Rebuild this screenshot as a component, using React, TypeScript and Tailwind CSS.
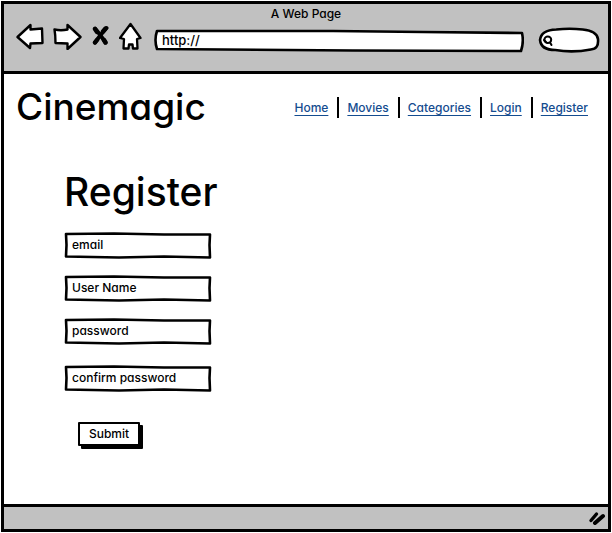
import type { ReactNode } from "react";

const links = ["Home", "Movies", "Categories", "Login", "Register"];

const fields = [
  { id: "email", label: "email", type: "email", gap: "mb-4" },
  { id: "username", label: "User Name", type: "text", gap: "mb-4" },
  { id: "password", label: "password", type: "password", gap: "mb-5" },
  { id: "confirm", label: "confirm password", type: "password", gap: "mb-7" },
];

function ToolButton({ label, width, children }: { label: string; width: string; children: ReactNode }) {
  return (
    <button type="button" aria-label={label} className={`${width} h-7 shrink-0`}>
      {children}
    </button>
  );
}

function Outline({ viewBox, d }: { viewBox: string; d: string }) {
  return (
    <svg
      aria-hidden="true"
      viewBox={viewBox}
      preserveAspectRatio="none"
      className="pointer-events-none absolute inset-0 h-full w-full"
    >
      <path d={d} fill="white" stroke="black" strokeWidth="2.6" strokeLinejoin="round" vectorEffect="non-scaling-stroke" />
    </svg>
  );
}

function Field({ id, label, type, gap }: { id: string; label: string; type: string; gap: string }) {
  return (
    <div className={`relative h-[27px] w-[148px] ${gap}`}>
      <Outline viewBox="0 0 148 27" d="M2 2 L50 1.5 L100 2.5 L146 2.5 L145.5 13 L146 25.5 L100 24.5 L55 25.5 L2 24.5 L2.5 13Z" />
      <input
        id={id}
        type={type}
        aria-label={label}
        placeholder={label}
        className="relative h-full w-full bg-transparent px-2 pb-0.5 text-[12px] outline-none placeholder:text-black"
      />
    </div>
  );
}

export default function App() {
  return (
    <div className="flex min-h-screen flex-col bg-white p-px font-['Inter','Open_Sans',sans-serif] text-[12px] font-medium text-black [font-feature-settings:'cv11']">
      <div className="flex flex-1 flex-col border-[3px] border-black">
        <header className="h-[70px] border-b-[3px] border-black bg-[#c1c1c1]">
          <p className="pt-0.5 text-center leading-4">A Web Page</p>
          <div className="flex items-start pl-3 pr-2">
            <ToolButton label="Back" width="mr-2 w-[29px]">
              <svg viewBox="0 0 29 28" className="h-7 w-[29px]" fill="white" stroke="black" strokeWidth="2.4" strokeLinejoin="round">
                <path d="M1.5 15 L14.5 3 L14.5 7.5 L26 6.5 L26.5 21 L14.5 21.5 L14 26Z" />
              </svg>
            </ToolButton>
            <ToolButton label="Forward" width="mr-2.5 w-[29px]">
              <svg viewBox="0 0 29 28" className="h-7 w-[29px]" fill="white" stroke="black" strokeWidth="2.4" strokeLinejoin="round">
                <path d="M1.5 7.5 Q8 9 14.5 7.5 L14.5 3 L27.5 15 L14.5 27 L14.5 21.5 L2.5 21 Q2.5 13 1.5 7.5Z" />
              </svg>
            </ToolButton>
            <ToolButton label="Stop" width="mr-2.5 w-[17px]">
              <svg viewBox="0 0 17 28" className="h-7 w-[17px]" fill="none" stroke="black" strokeLinecap="round">
                <path d="M3 6.5 Q7 11 13.5 20.5" strokeWidth="4" />
                <path d="M14.5 6 Q9 12 3 20.5" strokeWidth="4" />
                <path d="M3 7 L5 10 M13.5 6.5 L11 9.5 M12 18 L13.5 20.5 M5 18 L3 20.5" strokeWidth="4.4" />
              </svg>
            </ToolButton>
            <ToolButton label="Home" width="mr-3 w-[23px]">
              <svg viewBox="0 0 23 28" className="h-7 w-[23px]" fill="white" stroke="black" strokeWidth="2.3" strokeLinejoin="round">
                <path d="M11.5 2 L21.5 16 L18 17 L18.5 26.5 L14 26.5 L13.5 22.5 L10 22.5 L9.5 26.5 L4.5 26.5 L5 17 L1 16Z" />
              </svg>
            </ToolButton>
            <div className="relative mt-[7px] h-6 flex-1">
              <Outline viewBox="0 0 372 24" d="M3 2 L180 2 L270 3 L370 4 Q372 13 369 22 L200 21.5 L3 20 Q0 11 3 2Z" />
              <input aria-label="Address" defaultValue="http://" className="relative h-full w-full bg-transparent px-2 pb-0.5 text-[13px] outline-none" />
            </div>
            <div className="relative ml-3.5 mt-[5px] h-[26px] w-[62px]">
              <Outline viewBox="0 0 61 26" d="M2 13 Q3 3 18 2.5 Q31 1 44 2.5 Q58 4 59 12 Q60 22 52 22.5 Q34 26 17 23 Q3 23 2 13Z" />
              <svg viewBox="0 0 12 12" fill="none" stroke="black" strokeWidth="2" strokeLinecap="round" className="absolute left-1 top-2 h-3 w-3" aria-hidden="true">
                <ellipse cx="5.8" cy="4.8" rx="3.4" ry="3.2" />
                <path d="M2 5 L4 7 M8 7.5 L9.5 10" />
              </svg>
              <input aria-label="Search" className="relative h-full w-full bg-transparent pl-5 pr-2 outline-none" />
            </div>
          </div>
        </header>

        <main className="flex-1">
          <div className="flex items-center justify-between pl-3 pr-5 pt-2">
            <h1 className="text-[37px] font-medium leading-[50px]">Cinemagic</h1>
            <nav aria-label="Main" className="flex divide-x-2 divide-black">
              {links.map((link) => (
                <a
                  key={link}
                  href="#"
                  className="pl-2 pr-[9px] pt-px leading-5 text-[#144c8f] underline decoration-1 underline-offset-[3px] [text-decoration-skip-ink:none] last:pr-0"
                >
                  {link}
                </a>
              ))}
            </nav>
          </div>

          <form className="pb-10 pl-[60px] pt-9" onSubmit={(e) => e.preventDefault()}>
            <h2 className="mb-4 text-[39px] font-medium leading-[48px]">Register</h2>
            {fields.map((field) => (
              <Field key={field.id} {...field} />
            ))}
            <button
              type="submit"
              className="ml-[14px] mt-0.5 h-6 w-[62px] rounded-[1px] border-2 border-black bg-white leading-5 shadow-[3px_3px_0_black]"
            >
              Submit
            </button>
          </form>
        </main>

        <footer className="flex h-[25px] items-center justify-end border-t-[3px] border-black bg-[#c1c1c1] pr-0.5">
          <svg viewBox="0 0 18 14" className="h-[14px] w-[18px]" fill="none" stroke="black" strokeLinecap="round" aria-hidden="true">
            <path d="M3 9.5 L8.5 3" strokeWidth="3.4" />
            <path d="M7 12 L15 5" strokeWidth="4" />
          </svg>
        </footer>
      </div>
    </div>
  );
}
